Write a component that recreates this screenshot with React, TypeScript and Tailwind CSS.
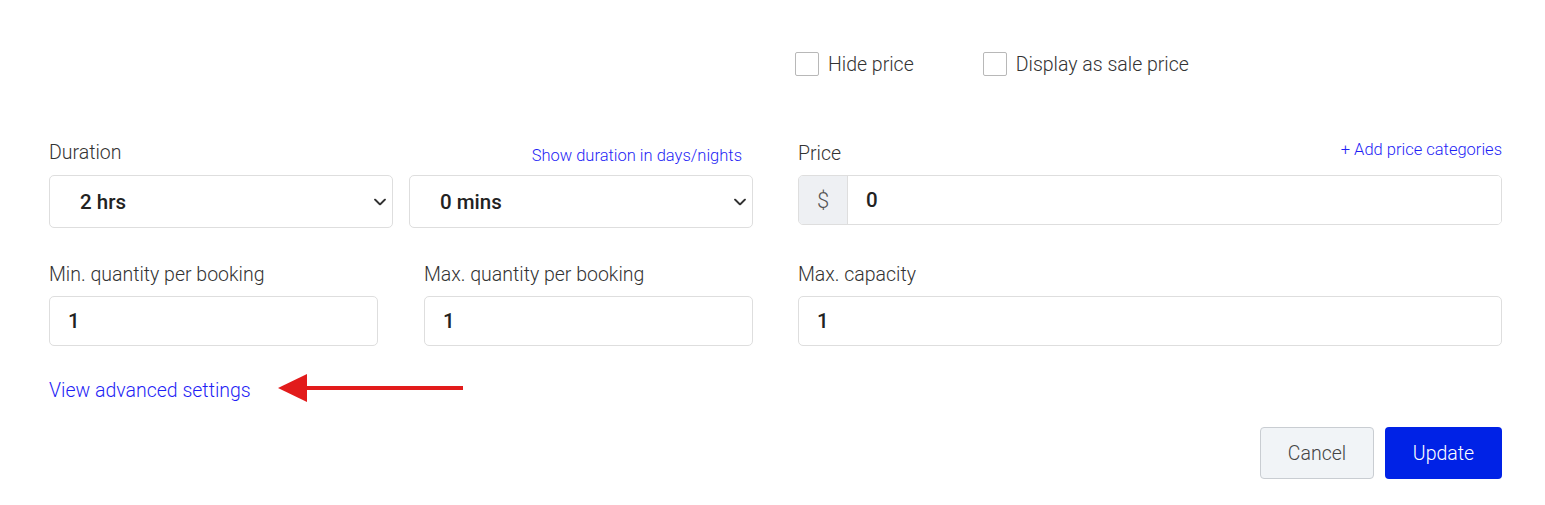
import { useState } from 'react';

const DURATION_HOURS = ['0 hrs', '1 hr', '2 hrs', '3 hrs', '4 hrs', '5 hrs', '6 hrs'];
const DURATION_MINS = ['0 mins', '15 mins', '30 mins', '45 mins'];

function Chevron() {
  return (
    <svg
      width="12"
      height="7"
      viewBox="0 0 12 7"
      fill="none"
      className="pointer-events-none absolute right-[7px] top-1/2 -translate-y-1/2"
    >
      <path d="M1 1l5 5 5-5" stroke="#333" strokeWidth="1.8" strokeLinecap="round" strokeLinejoin="round" />
    </svg>
  );
}

function SelectBox({ value, options, onChange }: { value: string; options: string[]; onChange: (v: string) => void }) {
  return (
    <div className="relative flex-1">
      <select
        value={value}
        onChange={(e) => onChange(e.target.value)}
        className="h-[53px] w-full appearance-none rounded-[5px] border border-[#dedede] bg-white pl-[30px] pt-[2px] text-[20.5px] font-medium text-[#222] outline-none"
      >
        {options.map((o) => (
          <option key={o}>{o}</option>
        ))}
      </select>
      <Chevron />
    </div>
  );
}

function Field({ label, value, className = '' }: { label: string; value: string; className?: string }) {
  return (
    <div className={'flex flex-col ' + className}>
      <label className="h-6 pt-[1px] text-[19.5px] leading-6 font-light text-[#333]">{label}</label>
      <input
        defaultValue={value}
        className="mt-[10px] h-[50px] w-full rounded-[5px] border border-[#dedede] bg-white px-[18px] text-[20.5px] font-medium text-[#222] outline-none"
      />
    </div>
  );
}

function Check({ label }: { label: string }) {
  const [on, setOn] = useState(false);
  return (
    <label className="flex h-6 items-center gap-[9px] cursor-pointer">
      <span
        onClick={() => setOn(!on)}
        className={
          'h-6 w-6 rounded-[2px] border border-[#b8b8b8] ' + (on ? 'bg-[#0022e6]' : 'bg-white')
        }
      />
      <span className="relative top-[1px] text-[19.5px] leading-6 font-light text-[#333]">{label}</span>
    </label>
  );
}

export default function App() {
  const [hours, setHours] = useState('2 hrs');
  const [mins, setMins] = useState('0 mins');

  return (
    <div
      className="min-h-[505px] w-[1545px] bg-white pl-[49px] pt-[52px]"
      style={{ fontFamily: 'Roboto, "Liberation Sans", sans-serif' }}
    >
      <div className="flex w-[1453px] flex-col">
        {/* top checkboxes */}
        <div className="flex h-6 gap-[45px]">
          <div className="w-[704px]" />
          <div className="-ml-[3px] flex gap-[69px]">
            <Check label="Hide price" />
            <Check label="Display as sale price" />
          </div>
        </div>

        <div className="mt-[65px] flex gap-[45px]">
          {/* left column */}
          <div className="flex w-[704px] flex-col">
            <div className="flex h-6 items-end justify-between">
              <span className="pt-[1px] text-[19.5px] leading-6 font-light text-[#333]">Duration</span>
              <a href="#" className="mr-[11px] mb-[-1px] text-[16.5px] leading-5 font-light text-[#1f1ff5]">
                Show duration in days/nights
              </a>
            </div>
            <div className="mt-[10px] flex gap-4">
              <SelectBox value={hours} options={DURATION_HOURS} onChange={setHours} />
              <SelectBox value={mins} options={DURATION_MINS} onChange={setMins} />
            </div>
            <div className="mt-[34px] flex gap-[46px]">
              <Field className="flex-1" label="Min. quantity per booking" value="1" />
              <Field className="flex-1" label="Max. quantity per booking" value="1" />
            </div>
          </div>

          {/* right column */}
          <div className="flex w-[704px] flex-col">
            <div className="flex h-6 items-start justify-between">
              <span className="pt-[1px] text-[19.5px] leading-6 font-light text-[#333]">Price</span>
              <a href="#" className="-mt-[1px] text-[16.5px] leading-5 font-light text-[#1f1ff5]">
                + Add price categories
              </a>
            </div>
            <div className="mt-[10px] flex h-[50px] overflow-hidden rounded-[5px] border border-[#dedede]">
              <span className="flex w-[49px] items-center justify-center border-r border-[#dedede] bg-[#eef0f3] text-[22px] font-light text-[#555]">
                $
              </span>
              <input
                defaultValue="0"
                className="flex-1 bg-white px-[18px] text-[20.5px] font-medium text-[#222] outline-none"
              />
            </div>
            <Field className="mt-[37px]" label="Max. capacity" value="1" />
          </div>
        </div>

        <div className="mt-[32px] flex h-6 items-center">
          <a href="#" className="pt-[2px] text-[19.5px] leading-6 font-light text-[#1f1ff5]">
            View advanced settings
          </a>
          <svg width="186" height="30" viewBox="0 0 186 30" className="ml-[27px] -mt-[3px]">
            <path d="M0 14L29 0V28Z" fill="#e21b1b" />
            <rect x="26" y="12" width="159" height="4" fill="#e21b1b" />
          </svg>
        </div>

        <div className="mt-[25px] flex justify-end gap-[11px]">
          <button className="h-[52px] w-[114px] rounded-[4px] border border-[#c9cdd2] bg-[#f1f4f7] pt-[2px] text-[19.5px] font-light text-[#444]">
            Cancel
          </button>
          <button className="h-[52px] w-[117px] rounded-[4px] bg-[#0022e6] pt-[2px] text-[19.5px] font-light text-white">
            Update
          </button>
        </div>
      </div>
    </div>
  );
}
